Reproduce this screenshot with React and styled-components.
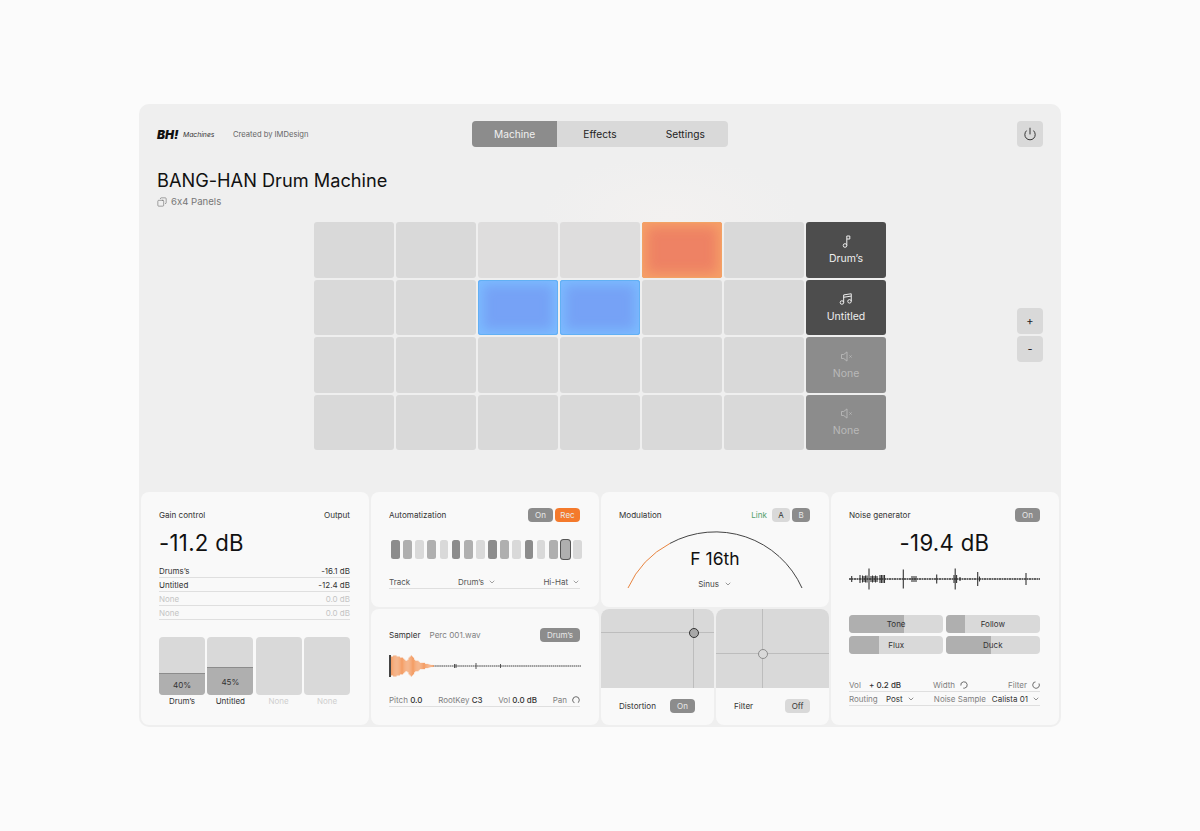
import React from 'react';
import styled, { createGlobalStyle } from 'styled-components';
import { Power, ChevronDown, Copy } from 'lucide-react';

const GlobalStyle = createGlobalStyle`
  html, body {
    margin: 0;
    padding: 0;
    background: #fbfbfb;
    font-family: 'Inter', 'Liberation Sans', sans-serif;
    font-feature-settings: 'calt' 0;
    color: #222;
  }
  * { box-sizing: border-box; }
`;

const Page = styled.div`
  width: 1200px;
  height: 831px;
  padding: 104px 139px;
`;

const Panel = styled.main`
  width: 922px;
  height: 623px;
  background: #efefef;
  border-radius: 10px;
  padding: 17px 2px 2px;
  display: flex;
  flex-direction: column;
  background-image: radial-gradient(ellipse 130px 60px at 530px 112px, #f3f1f0 0%, #efefef 100%);
`;

const Header = styled.header`
  display: grid;
  grid-template-columns: 1fr 256px 1fr;
  align-items: center;
  padding: 0 16px;
  height: 26px;
`;

const Brand = styled.div`
  display: flex;
  align-items: center;
`;

const Logo = styled.span`
  font-size: 12px;
  font-weight: 900;
  font-style: italic;
  color: #111;
  width: 26px;
`;

const LogoSub = styled.span`
  font-size: 6.8px;
  font-style: italic;
  font-weight: 400;
  color: #333;
  width: 50px;
`;

const Credit = styled.span`
  font-size: 7.6px;
  color: #666;
`;

const Tabs = styled.nav`
  display: grid;
  grid-template-columns: repeat(3, 1fr);
  height: 26px;
  background: #d9d9d9;
  border-radius: 4px;
  overflow: hidden;
`;

const Tab = styled.div`
  display: flex;
  align-items: center;
  justify-content: center;
  font-size: 10.2px;
  background: ${(p) => (p.$active ? '#8c8c8c' : 'transparent')};
  color: ${(p) => (p.$active ? '#f0f0f0' : '#222')};
`;

const PowerButton = styled.div`
  justify-self: end;
  width: 26px;
  height: 26px;
  background: #d9d9d9;
  border-radius: 4px;
  display: flex;
  align-items: center;
  justify-content: center;
  color: #111;
`;

const TitleBlock = styled.div`
  padding: 20px 16px 0;
  height: 75px;
`;

const Title = styled.h1`
  margin: 0;
  font-size: 18.2px;
  line-height: 26px;
  font-weight: 400;
  color: #111;
`;

const Subtitle = styled.div`
  display: flex;
  align-items: center;
  gap: 4px;
  margin-top: 2px;
  font-size: 9.6px;
  line-height: 14px;
  color: #777;
`;

const FlippedIcon = styled.span`
  display: inline-flex;
  transform: scaleX(-1);
  color: #666;
`;

const PadArea = styled.section`
  display: grid;
  grid-template-columns: 1fr 572px 1fr;
  padding: 0 16px;
  height: 228px;
`;

const PadGrid = styled.div`
  grid-column: 2;
  display: grid;
  grid-template-columns: repeat(7, 80px);
  grid-template-rows: repeat(4, 1fr);
  gap: 2px;
`;

const Pad = styled.div`
  border-radius: 3px;
  background: ${(p) =>
    p.$color === 'orange'
      ? '#ee8264'
      : p.$color === 'blue'
        ? '#76a2f6'
        : p.$soft
          ? '#dedddd'
          : '#d9d9d9'};
  box-shadow: ${(p) =>
    p.$color === 'orange'
      ? 'inset 0 0 0 1px #f2a264, inset 0 0 12px 5px #f6a068'
      : p.$color === 'blue'
        ? 'inset 0 0 0 1px #62b0f4, inset 0 0 12px 5px #7cbcff'
        : 'none'};
`;

const TrackPad = styled.div`
  border-radius: 3px;
  background: ${(p) => (p.$on ? '#4d4d4d' : '#8c8c8c')};
  color: ${(p) => (p.$on ? '#eeeeee' : '#b9b9b9')};
  display: flex;
  flex-direction: column;
  align-items: center;
  justify-content: center;
  gap: 4px;
  padding-top: 1px;
  font-size: 10.5px;
  line-height: 14px;
`;

const ZoomButtons = styled.div`
  justify-self: end;
  align-self: center;
  display: flex;
  flex-direction: column;
  gap: 2px;
  padding-bottom: 2px;
`;

const ZoomButton = styled.div`
  width: 26px;
  height: 26px;
  background: #d9d9d9;
  border-radius: 4px;
  display: flex;
  align-items: center;
  justify-content: center;
  font-size: 11px;
  color: #222;
`;

const Bottom = styled.section`
  margin-top: 42px;
  display: grid;
  grid-template-columns: repeat(4, 228px);
  grid-template-rows: 115px 116px;
  gap: 2px;
`;

const Card = styled.article`
  background: #f9f9f9;
  border-radius: 8px;
  grid-row: ${(p) => p.$row || 'auto'};
  grid-column: ${(p) => p.$col || 'auto'};
  padding: ${(p) => p.$top || 16}px 19px 0 18px;
  display: flex;
  flex-direction: column;
  min-width: 0;
`;

const CardHead = styled.div`
  display: flex;
  align-items: center;
  justify-content: space-between;
  height: 14px;
  font-size: 8.1px;
  color: #333;
`;

const HeadGroup = styled.div`
  display: flex;
  align-items: center;
  gap: 2px;
`;

const Chip = styled.span`
  height: 14px;
  min-width: ${(p) => p.$w || 25}px;
  padding: 0 5px;
  border-radius: 4px;
  display: inline-flex;
  align-items: center;
  justify-content: center;
  font-size: 8px;
  background: ${(p) =>
    p.$kind === 'orange' ? '#f47a2c' : p.$kind === 'light' ? '#d9d9d9' : '#8c8c8c'};
  color: ${(p) => (p.$kind === 'light' ? '#333' : '#e9e9e9')};
`;

const BigValue = styled.div`
  font-size: 22.2px;
  line-height: 30px;
  font-weight: 400;
  color: #111;
  text-align: ${(p) => (p.$center ? 'center' : 'left')};
  margin-top: 6px;
  letter-spacing: 0.3px;
`;

const GainList = styled.div`
  margin-top: 6px;
`;

const GainRow = styled.div`
  display: flex;
  justify-content: space-between;
  align-items: center;
  height: 14px;
  font-size: 8px;
  border-bottom: 1px solid #dfdfdf;
  color: ${(p) => (p.$off ? '#c4c4c4' : '#333')};
`;

const Meters = styled.div`
  margin-top: 17px;
  display: grid;
  grid-template-columns: repeat(4, 1fr);
  gap: 2.3px;
`;

const Meter = styled.div`
  display: flex;
  flex-direction: column;
  align-items: center;
  font-size: 8px;
  color: ${(p) => (p.$off ? '#cfcfcf' : '#333')};
`;

const MeterTrack = styled.div`
  width: 100%;
  height: 58px;
  background: #d9d9d9;
  border-radius: 4px;
  overflow: hidden;
  display: flex;
  flex-direction: column;
  justify-content: flex-end;
`;

const MeterFill = styled.div`
  background: #afafaf;
  border-top: 1px solid #8c8c8c;
  display: flex;
  align-items: center;
  justify-content: center;
  font-size: 8px;
  color: #333;
`;

const MeterName = styled.span`
  line-height: 12px;
`;

const Steps = styled.div`
  display: flex;
  justify-content: space-between;
  margin-top: 18px;
  margin-right: -2px;
  padding-left: 2px;
`;

const Step = styled.div`
  width: 8.7px;
  height: 19px;
  border-radius: 2.5px;
  background: ${(p) => p.$fill};
  box-shadow: ${(p) => (p.$sel ? '0 0 0 1px #555' : 'none')};
`;

const FieldRow = styled.div`
  display: flex;
  align-items: center;
  justify-content: space-between;
  height: 14px;
  font-size: 8px;
  color: #555;
  border-bottom: 1px solid #dfdfdf;
  margin-top: ${(p) => p.$top || 0}px;
`;

const TrackLabel = styled.span`
  width: 69px;
`;

const Select = styled.span`
  display: inline-flex;
  align-items: center;
  gap: 4px;
  margin-left: ${(p) => (p.$push ? 'auto' : '0')};
  color: ${(p) => p.$color || '#555'};
`;

const Muted = styled.span`
  color: #808080;
`;

const FieldLabel = styled.span`
  display: inline-block;
  width: ${(p) => p.$w}px;
  color: #808080;
`;

const Strong = styled.b`
  font-weight: 500;
  color: #333;
`;

const KnobRow = styled.span`
  display: inline-flex;
  align-items: center;
  gap: 5px;
  color: #808080;
  margin-left: ${(p) => (p.$push ? 'auto' : '0')};
  margin-right: ${(p) => p.$right || 0}px;
`;

const SamplerName = styled.span`
  color: #808080;
  margin-left: 9px;
`;

const WaveBox = styled.div`
  margin-top: ${(p) => p.$top}px;
  height: 24px;
  line-height: 0;
`;

const ModBody = styled.div`
  position: relative;
  height: 66px;
  margin: 3px -1px 0 0;
`;

const ModValue = styled.div`
  position: absolute;
  top: 21px;
  left: 0;
  right: 0;
  text-align: center;
  font-size: 17.5px;
  line-height: 26px;
  color: #111;
`;

const ModSelect = styled.div`
  position: absolute;
  top: 52px;
  left: 0;
  right: 0;
  display: flex;
  justify-content: center;
  align-items: center;
  gap: 5px;
  font-size: 8px;
  line-height: 14px;
  color: #444;
`;

const LinkText = styled.span`
  color: #54a06c;
  margin-right: 3px;
`;

const XYCards = styled.div`
  grid-column: 3;
  grid-row: 2;
  display: grid;
  grid-template-columns: 113px 113px;
  gap: 2px;
`;

const XYCard = styled.div`
  background: #f9f9f9;
  border-radius: 8px;
  overflow: hidden;
  display: flex;
  flex-direction: column;
`;

const XYField = styled.div`
  position: relative;
  height: 78.5px;
  background: #d9d9d9;
`;

const Crosshair = styled.div`
  position: absolute;
  background: #bdbdbd;
  ${(p) =>
    p.$axis === 'x'
      ? `left: 0; right: 0; height: 1px; top: ${p.$at}px;`
      : `top: 0; bottom: 0; width: 1px; left: ${p.$at}px;`}
`;

const XYHandle = styled.div`
  position: absolute;
  left: ${(p) => p.$x}px;
  top: ${(p) => p.$y}px;
  width: 10px;
  height: 10px;
  border-radius: 50%;
  transform: translate(-50%, -50%);
  background: ${(p) => (p.$on ? '#a8a8a8' : '#d9d9d9')};
  border: 1px solid ${(p) => (p.$on ? '#333' : '#8c8c8c')};
`;

const XYFoot = styled.div`
  flex: 1;
  display: flex;
  align-items: center;
  justify-content: space-between;
  padding: 0 19px 0 18px;
  font-size: 8.1px;
  color: #333;
`;

const Sliders = styled.div`
  margin-top: 24px;
  display: grid;
  grid-template-columns: repeat(2, 1fr);
  grid-auto-rows: 18.3px;
  gap: 2.6px 2.3px;
`;

const SliderBox = styled.div`
  position: relative;
  background: #d9d9d9;
  border-radius: 4px;
  overflow: hidden;
  display: flex;
  align-items: center;
  justify-content: center;
  font-size: 8px;
  color: #333;
`;

const SliderFill = styled.div`
  position: absolute;
  inset: 0 auto 0 0;
  background: #afafaf;
`;

const SliderText = styled.span`
  position: relative;
`;

const NoiseFields = styled.div`
  margin-top: 24px;
`;

const FieldGroup = styled.span`
  display: inline-flex;
  align-items: center;
`;

const tracks = [
  { name: 'Drums’s', value: '-16.1 dB' },
  { name: 'Untitled', value: '-12.4 dB' },
  { name: 'None', value: '0.0 dB', off: true },
  { name: 'None', value: '0.0 dB', off: true },
];

const meters = [
  { name: 'Drum’s', pct: 40, h: 22 },
  { name: 'Untitled', pct: 45, h: 28 },
  { name: 'None', off: true },
  { name: 'None', off: true },
];

const C1 = '#8c8c8c';
const C2 = '#afafaf';
const C3 = '#d9d9d9';
const stepColors = [C1, C2, C3, C2, C3, C1, C2, C3, C1, C2, C3, C1, C3, C2, C2, C3];

const sliders = [
  { name: 'Tone', w: 58.5 },
  { name: 'Follow', w: 20 },
  { name: 'Flux', w: 32 },
  { name: 'Duck', w: 48 },
];

// amplitudes picked by eye from the reference
const samplerBars = [9, 9, 10, 10, 10, 9, 9, 9, 8, 8, 8, 7, 6, 5, 5, 6, 8, 9, 10, 9, 8, 6, 5, 5, 5, 4, 3, 3, 3, 3, 3, 2, 2, 2, 1.5, 1.2, 1, 1, 0.8];
const noiseTicks = [
  [2.7, 3], [11, 4], [13.5, 3.5], [15, 3], [16.5, 3.5], [18, 3.5], [20, 10.5], [22, 3], [23.5, 3.5], [25, 3], [26.5, 3.5], [28, 3],
  [31, 4], [32.5, 4], [34, 4], [35.5, 4], [54.3, 9.5], [63, 3], [65, 3], [67, 3], [87.7, 4.5],
  [105, 4], [106.2, 10.5], [107.6, 4], [111, 2], [128.7, 7], [130.5, 2.5], [177, 6],
];

function Chevron() {
  return <ChevronDown size={8} strokeWidth={1.6} />;
}

function Knob({ turn = 0 }) {
  return (
    <svg width="8" height="8" viewBox="0 0 8 8" fill="none">
      <circle
        cx="4"
        cy="4"
        r="3.2"
        stroke="#666"
        strokeWidth="0.9"
        strokeDasharray="16 4.2"
        transform={`rotate(${turn} 4 4)`}
      />
    </svg>
  );
}

function SamplerWave() {
  return (
    <svg width="192" height="24" viewBox="0 0 192 24">
      <line x1="44" y1="12" x2="192" y2="12" stroke="#444" strokeWidth="1" strokeDasharray="1.6 0.5" />
      {[[65.5, 2], [67, 2], [87, 3], [111.5, 2]].map(([x, a]) => (
        <line key={x} x1={x} x2={x} y1={12 - a} y2={12 + a} stroke="#444" strokeWidth="0.9" />
      ))}
      {samplerBars.map((a, i) => (
        <rect key={i} x={2 + i * 1.1} y={12 - a * 1.05} width="1.1" height={a * 2.1} fill="#f4a069" />
      ))}
      <rect x="0" y="1" width="2" height="22" fill="#444" />
    </svg>
  );
}

function NoiseWave() {
  return (
    <svg width="191" height="24" viewBox="0 0 191 24">
      <line x1="0" y1="12" x2="191" y2="12" stroke="#333" strokeWidth="1.4" strokeDasharray="2 0.5" />
      {noiseTicks.map(([x, a]) => (
        <line key={x} x1={x} x2={x} y1={12 - a} y2={12 + a} stroke="#333" strokeWidth="1.1" />
      ))}
    </svg>
  );
}

function ModArc() {
  return (
    <svg width="192" height="66" viewBox="0 0 192 66" fill="none">
      <path d="M9 63 A95 95 0 0 1 51 18.4" stroke="#e8843f" strokeWidth="1" />
      <path d="M51 18.4 A95 95 0 0 1 183 63" stroke="#444" strokeWidth="1" />
    </svg>
  );
}

function NoteIcon() {
  return (
    <svg width="13" height="13" viewBox="0 0 13 13" fill="none" stroke="currentColor" strokeWidth="1">
      <circle cx="5" cy="10.5" r="1.8" />
      <path d="M6.8 10.5V1h3v3h-3" />
    </svg>
  );
}

function NotesIcon() {
  return (
    <svg width="14" height="14" viewBox="0 0 24 24" fill="none" stroke="currentColor" strokeWidth="1.7">
      <path d="M8 18V5l13-2v13" />
      <path d="M8 9l13-2" />
      <circle cx="5" cy="18" r="3" />
      <circle cx="18" cy="16" r="3" />
    </svg>
  );
}

function MuteIcon() {
  return (
    <svg width="13" height="13" viewBox="0 0 13 13" fill="none" stroke="currentColor" strokeWidth="0.9">
      <path d="M1.5 4.5h2.2l3.3-2.6v9.2l-3.3-2.6H1.5z" />
      <path d="M9.5 5.5l2 2M11.5 5.5l-2 2" />
    </svg>
  );
}

export default function App() {
  const pads = [];
  for (let row = 0; row < 4; row++) {
    for (let col = 0; col < 6; col++) {
      let color = null;
      if (row === 0 && col === 4) color = 'orange';
      if (row === 1 && (col === 2 || col === 3)) color = 'blue';
      pads.push(<Pad key={`${row}-${col}`} $color={color} $soft={row === 0 && (col === 2 || col === 3)} />);
    }
    if (row === 0) {
      pads.push(
        <TrackPad key="t0" $on>
          <NoteIcon />
          Drum’s
        </TrackPad>,
      );
    } else if (row === 1) {
      pads.push(
        <TrackPad key="t1" $on>
          <NotesIcon />
          Untitled
        </TrackPad>,
      );
    } else {
      pads.push(
        <TrackPad key={`t${row}`}>
          <MuteIcon />
          None
        </TrackPad>,
      );
    }
  }

  return (
    <Page>
      <GlobalStyle />
      <Panel>
        <Header>
          <Brand>
            <Logo>BH!</Logo>
            <LogoSub>Machines</LogoSub>
            <Credit>Created by IMDesign</Credit>
          </Brand>
          <Tabs>
            <Tab $active>Machine</Tab>
            <Tab>Effects</Tab>
            <Tab>Settings</Tab>
          </Tabs>
          <PowerButton>
            <Power size={14} strokeWidth={1.4} />
          </PowerButton>
        </Header>

        <TitleBlock>
          <Title>BANG-HAN Drum Machine</Title>
          <Subtitle>
            <FlippedIcon>
              <Copy size={10} strokeWidth={1.4} />
            </FlippedIcon>
            6x4 Panels
          </Subtitle>
        </TitleBlock>

        <PadArea>
          <PadGrid>{pads}</PadGrid>
          <ZoomButtons>
            <ZoomButton>+</ZoomButton>
            <ZoomButton>-</ZoomButton>
          </ZoomButtons>
        </PadArea>

        <Bottom>
          <Card $row="1 / span 2" $col="1">
            <CardHead>
              <span>Gain control</span>
              <span>Output</span>
            </CardHead>
            <BigValue>-11.2 dB</BigValue>
            <GainList>
              {tracks.map((t, i) => (
                <GainRow key={i} $off={t.off}>
                  <span>{t.name}</span>
                  <span>{t.value}</span>
                </GainRow>
              ))}
            </GainList>
            <Meters>
              {meters.map((m, i) => (
                <Meter key={i} $off={m.off}>
                  <MeterTrack>
                    {m.pct && <MeterFill style={{ height: m.h }}>{m.pct}%</MeterFill>}
                  </MeterTrack>
                  <MeterName>{m.name}</MeterName>
                </Meter>
              ))}
            </Meters>
          </Card>

          <Card $col="2" $row="1">
            <CardHead>
              <span>Automatization</span>
              <HeadGroup>
                <Chip>On</Chip>
                <Chip $kind="orange">Rec</Chip>
              </HeadGroup>
            </CardHead>
            <Steps>
              {stepColors.map((c, i) => (
                <Step key={i} $fill={c} $sel={i === 14} />
              ))}
            </Steps>
            <FieldRow $top={16}>
              <TrackLabel>Track</TrackLabel>
              <Select>
                Drum’s <Chevron />
              </Select>
              <Select $push>
                Hi-Hat <Chevron />
              </Select>
            </FieldRow>
          </Card>

          <Card $col="2" $row="2" $top={19}>
            <CardHead>
              <span>
                Sampler
                <SamplerName>Perc 001.wav</SamplerName>
              </span>
              <Chip $w={40}>Drum’s</Chip>
            </CardHead>
            <WaveBox $top={12}>
              <SamplerWave />
            </WaveBox>
            <FieldRow $top={15}>
              <span>
                <Muted>Pitch</Muted> <Strong>0.0</Strong>
              </span>
              <span>
                <Muted>RootKey</Muted> <Strong>C3</Strong>
              </span>
              <span>
                <Muted>Vol</Muted> <Strong>0.0 dB</Strong>
              </span>
              <KnobRow>
                Pan <Knob turn={120} />
              </KnobRow>
            </FieldRow>
          </Card>

          <Card $col="3" $row="1">
            <CardHead>
              <span>Modulation</span>
              <HeadGroup>
                <LinkText>Link</LinkText>
                <Chip $w={18} $kind="light">
                  A
                </Chip>
                <Chip $w={18}>B</Chip>
              </HeadGroup>
            </CardHead>
            <ModBody>
              <ModArc />
              <ModValue>F 16th</ModValue>
              <ModSelect>
                Sinus <Chevron />
              </ModSelect>
            </ModBody>
          </Card>

          <XYCards>
            <XYCard>
              <XYField>
                <Crosshair $axis="x" $at={23} />
                <Crosshair $axis="y" $at={92} />
                <XYHandle $on $x={92.5} $y={23.5} />
              </XYField>
              <XYFoot>
                <span>Distortion</span>
                <Chip>On</Chip>
              </XYFoot>
            </XYCard>
            <XYCard>
              <XYField>
                <Crosshair $axis="x" $at={44} />
                <Crosshair $axis="y" $at={46} />
                <XYHandle $x={46.5} $y={44.5} />
              </XYField>
              <XYFoot>
                <span>Filter</span>
                <Chip $kind="light">Off</Chip>
              </XYFoot>
            </XYCard>
          </XYCards>

          <Card $row="1 / span 2" $col="4">
            <CardHead>
              <span>Noise generator</span>
              <Chip>On</Chip>
            </CardHead>
            <BigValue $center>-19.4 dB</BigValue>
            <WaveBox $top={9}>
              <NoiseWave />
            </WaveBox>
            <Sliders>
              {sliders.map((s) => (
                <SliderBox key={s.name}>
                  <SliderFill style={{ width: `${s.w}%` }} />
                  <SliderText>{s.name}</SliderText>
                </SliderBox>
              ))}
            </Sliders>
            <NoiseFields>
              <FieldRow>
                <FieldGroup>
                  <FieldLabel $w={20}>Vol</FieldLabel>
                  <Strong>+ 0.2 dB</Strong>
                </FieldGroup>
                <KnobRow $push $right={40}>
                  Width <Knob turn={170} />
                </KnobRow>
                <KnobRow>
                  Filter <Knob turn={-30} />
                </KnobRow>
              </FieldRow>
              <FieldRow>
                <FieldGroup>
                  <FieldLabel $w={37}>Routing</FieldLabel>
                  <Select $color="#333">
                    Post <Chevron />
                  </Select>
                </FieldGroup>
                <FieldGroup>
                  <FieldLabel $w={58}>Noise Sample</FieldLabel>
                  <Select $color="#333">
                    Calista 01 <Chevron />
                  </Select>
                </FieldGroup>
              </FieldRow>
            </NoiseFields>
          </Card>
        </Bottom>
      </Panel>
    </Page>
  );
}
